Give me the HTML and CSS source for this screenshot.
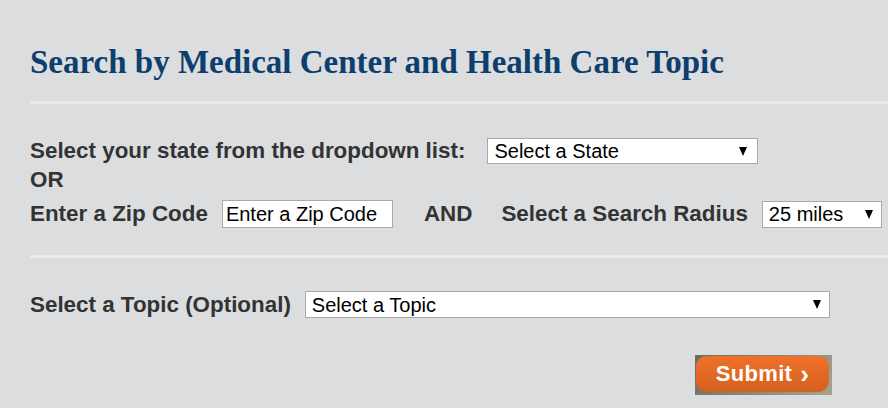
FILE: index.html
```html
<!DOCTYPE html>
<html>
<head>
<meta charset="utf-8">
<link rel="stylesheet" href="styles.css">
</head>
<body>
<div class="page">
  <h2 class="title">Search by Medical Center and Health Care Topic</h2>
  <hr class="rule">
  <form class="form">
    <div class="row state-row">
      <label class="lbl">Select your state from the dropdown list:</label>
      <span class="sel sel-state"><select><option>Select a State</option></select></span>
    </div>
    <div class="lbl or">OR</div>
    <div class="row zip-row">
      <label class="lbl">Enter a Zip Code</label>
      <input class="zip" type="text" value="Enter a Zip Code">
      <span class="lbl and">AND</span>
      <label class="lbl">Select a Search Radius</label>
      <span class="sel sel-radius"><select><option>25 miles</option></select></span>
    </div>
    <hr class="rule rule2">
    <div class="row topic-row">
      <label class="lbl">Select a Topic (Optional)</label>
      <span class="sel sel-topic"><select><option>Select a Topic</option></select></span>
    </div>
    <div class="actions">
      <button type="button" class="submit"><span class="submit-in">Submit <span class="chev">›</span></span></button>
    </div>
  </form>
</div>
</body>
</html>
```
FILE: styles.css
```css
html, body {
  margin: 0;
  padding: 0;
  background: #dcdddf;
}
.page {
  padding: 42px 0 0 30px;
  font-family: "Liberation Sans", Arial, sans-serif;
  color: #333333;
}
.title {
  margin: 0;
  font-family: "Liberation Serif", "Times New Roman", serif;
  font-weight: bold;
  font-size: 33px;
  line-height: 40px;
  color: #0d3f6e;
}
.rule {
  margin: 19px 0 0 0;
  border: 0;
  height: 3px;
  background: #e9eaeb;
}
.form {
  margin-top: 34px;
}
.row {
  display: flex;
  align-items: center;
}
.lbl {
  font-weight: bold;
  font-size: 22.4px;
  line-height: 26px;
  color: #333333;
}
.or {
  margin-top: 3px;
}
.zip-row {
  margin-top: 7px;
}
.sel {
  position: relative;
  display: inline-block;
}
.sel select {
  appearance: none;
  -webkit-appearance: none;
  font-family: "Liberation Sans", Arial, sans-serif;
  font-size: 20px;
  color: #000;
  background: #fff;
  border: 1px solid #a9a9a9;
  border-radius: 0;
  height: 26px;
  padding: 0 0 0 6px;
  margin: 0;
}
.sel::after {
  content: "";
  position: absolute;
  right: 11px;
  top: 9px;
  border-left: 4.5px solid transparent;
  border-right: 4.5px solid transparent;
  border-top: 9px solid #000;
  pointer-events: none;
}
.sel-state {
  margin-left: 22px;
}
.sel-state select {
  width: 271px;
}
.zip {
  margin-left: 14px;
  width: 171px;
  height: 28px;
  box-sizing: border-box;
  border: 1px solid #a9a9a9;
  padding: 0 0 0 3px;
  font-family: "Liberation Sans", Arial, sans-serif;
  font-size: 20px;
  color: #000;
  background: #fff;
}
.and {
  margin-left: 31px;
  margin-right: 29px;
}
.sel-radius {
  margin-left: 14px;
}
.sel-radius select {
  width: 120px;
  height: 27px;
}
.sel-radius::after {
  right: 9px;
}
.rule2 {
  margin-top: 27px;
}
.topic-row {
  margin-top: 33px;
}
.sel-topic {
  margin-left: 14px;
}
.sel-topic select {
  width: 525px;
  height: 27px;
}
.sel-topic::after {
  right: 9px;
}
.actions {
  display: flex;
  justify-content: flex-start;
  padding-left: 665px;
  margin-top: 37px;
}
.submit {
  width: 137px;
  height: 40px;
  padding: 1px 3px 3px 1px;
  margin: 0;
  border: 0;
  background: linear-gradient(135deg, #6f6a5c 0%, #8b8573 50%, #a7a292 100%);
  box-sizing: border-box;
  cursor: pointer;
}
.submit-in {
  display: flex;
  align-items: center;
  justify-content: center;
  width: 100%;
  height: 100%;
  border-radius: 11px;
  background: linear-gradient(#f0712a, #d4601e);
  color: #fff;
  font-family: "Liberation Sans", Arial, sans-serif;
  font-weight: bold;
  font-size: 22px;
  letter-spacing: 0.3px;
}
.chev {
  margin-left: 8px;
  font-size: 26px;
  line-height: 20px;
}
```
